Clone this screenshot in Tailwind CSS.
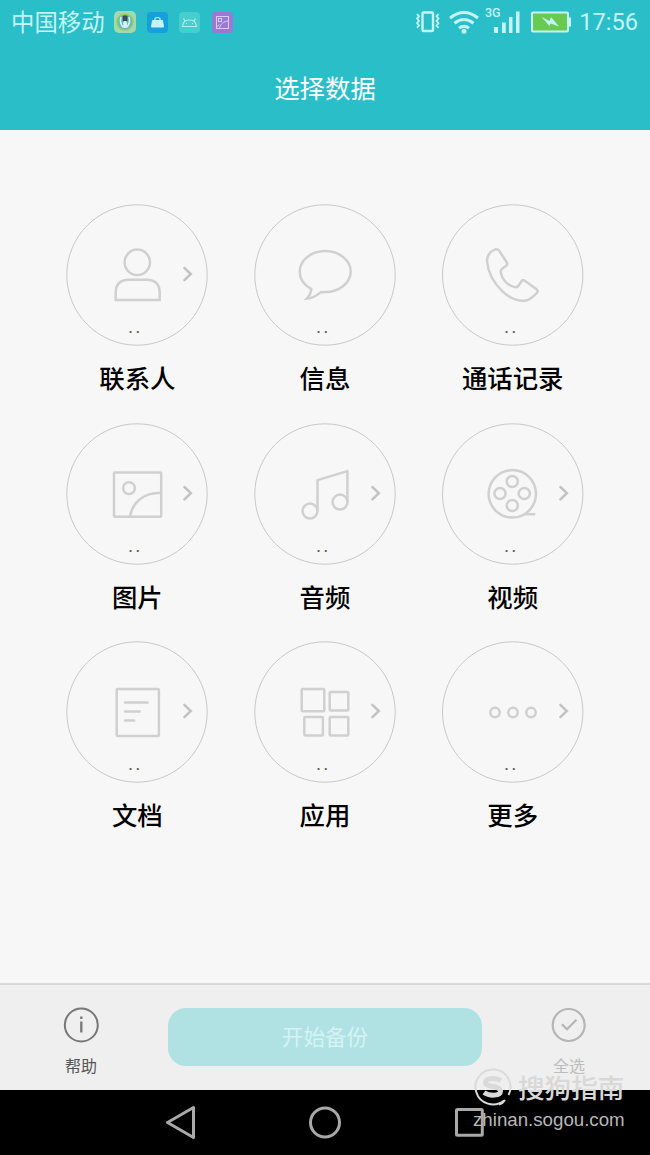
<!DOCTYPE html>
<html lang="zh-CN">
  <head>
    <meta charset="UTF-8" />
    <meta name="viewport" content="width=device-width, initial-scale=1.0" />
    <title>选择数据</title>
    <script src="https://cdn.jsdelivr.net/npm/@tailwindcss/browser@4"></script>
  </head>
  <body class="bg-[#f7f7f7] font-['Roboto','Noto_Sans_CJK_SC',sans-serif]">
    <div class="relative flex h-[1155px] w-[650px] flex-col overflow-hidden">
      <header class="h-[130px] bg-[#29bec8]">
        <!-- status bar -->
        <div class="flex h-[44px] items-center pl-[11px] pr-3 text-[#c5f4f6]">
          <span class="w-[103px] pt-[3px] text-[23.4px] leading-[41px] whitespace-nowrap">中国移动</span>
          <svg class="h-[22px] w-[22px]" viewBox="0 0 22 22" fill="none">
            <rect width="22" height="22" rx="5" fill="#a5d8b0" />
            <circle cx="11" cy="11" r="8" fill="#58bfc3" stroke="#9ccb62" stroke-width="1.5" />
            <path d="M7 6q-2 6 2.500 10.500M15 6q2 6-2.500 10.500" stroke="#e4f5e2" stroke-width="1.500" />
            <rect x="8.7" y="4.500" width="4.800" height="6" rx="1" fill="#404d59" />
            <rect x="9.200" y="10" width="3.800" height="7" rx="1.500" fill="#dceff5" />
          </svg>
          <svg class="ml-[11px] h-[21px] w-[21px]" viewBox="0 0 21 21" fill="none">
            <rect width="21" height="21" rx="4" fill="#159fdc" />
            <path d="M5.500 8.500h10l1 6.500h-12z" fill="#c9f3fa" stroke="#c9f3fa" stroke-linejoin="round" />
            <path d="M8 8V6.500q2.500-2 5 0V8" stroke="#c9f3fa" stroke-width="1.200" />
          </svg>
          <svg class="ml-[11px] h-[21px] w-[21px]" viewBox="0 0 21 21" fill="none">
            <rect width="21" height="21" rx="4" fill="#47cdcd" />
            <path d="M3.500 14.500q.5-6.500 7-6.500t7 6.500zM6 9 4.500 6.500M15 9l1.500-2.500" stroke="#b5f0ed" stroke-width="1.200" />
            <path d="M7 11.500h1M13 11.500h1" stroke="#b5f0ed" />
          </svg>
          <svg class="ml-3 h-[21px] w-[21px]" viewBox="0 0 21 21" fill="none">
            <rect width="21" height="21" rx="4" fill="#9b78d4" />
            <g stroke="#d9cdf5">
              <rect x="4.500" y="4.500" width="12" height="12" />
              <rect x="6.500" y="6.500" width="3" height="3" />
              <path d="M7.500 16.500c.5-4 4-7.500 9-7.500M5 14.500l2.500-2" />
            </g>
          </svg>
          <div class="ml-auto flex items-center">
            <svg class="h-[44px] w-[160px]" viewBox="411 0 160 44" fill="none">
              <rect x="422.500" y="12.500" width="10.500" height="18.500" rx="1" stroke="#c5f4f6" stroke-width="2.400" />
              <path d="m417 14 2 2.300-2 2.300 2 2.300-2 2.300 2 2.300-2 2.300M438.500 14l-2 2.300 2 2.300-2 2.300 2 2.300-2 2.300 2 2.300" stroke="#c5f4f6" stroke-width="1.800" />
              <g stroke="#c5f4f6" stroke-width="3">
                <path d="M450 18q14-11 28 0" />
                <path d="M454.500 23.300q9.500-7.500 19 0" />
                <path d="M459 28.200q5-4 10 0" />
              </g>
              <circle cx="464" cy="31.200" r="2.500" fill="#c5f4f6" />
              <text x="485" y="16.500" class="text-[12.5px] font-medium" fill="#c5f4f6">3G</text>
              <path d="M494 27h4v6h-4zM502 22.500h3.800V33H502zM509 17h3.500v16H509zM516 11.500h3.500V33H516z" fill="#c5f4f6" />
              <rect x="532" y="12.500" width="36" height="19" rx="1" fill="#68ca50" stroke="#c5f4f6" stroke-width="2" />
              <path d="M569 17.500h2v9h-2z" fill="#c5f4f6" />
              <path d="m541.500 17 8 4 1.500-4 8 9.500-8.500-3-1 2.500z" fill="#c5f4f6" />
            </svg>
            <span class="ml-2 pt-px text-[23.6px] leading-[43px]">17:56</span>
          </div>
        </div>
        <h1 class="mt-[25px] text-center text-[25.4px] leading-[40px] text-white">选择数据</h1>
      </header>

      <main class="h-[853px] pt-[74.4px]">
        <div class="mx-auto grid w-[563px] auto-rows-[218.4px] grid-cols-3 text-[25.4px] font-medium text-black">
          <div class="flex flex-col items-center">
            <svg class="h-[142px] w-[142px]" viewBox="0 0 142 142" fill="none" stroke="#d0d0d0" stroke-width="2.5">
              <circle cx="71" cy="71" r="70.200" stroke="#c8c8c8" stroke-width="1" />
              <circle cx="71.300" cy="58.300" r="12.700" />
              <path d="M49.700 96V89q0-13.200 13.200-13.200h17.600q13.200 0 13.200 13.200v7z" />
              <path d="m118.400 63.800 6.400 6.200-6.400 6.200" stroke="#c3c3c3" stroke-width="2.500" stroke-linecap="round" />
              <text x="62.600" y="129" class="text-[15px] tracking-[3.1px]" fill="#555" stroke="none">..</text>
            </svg>
            <span class="mt-[13px] leading-10">联系人</span>
          </div>

          <div class="flex flex-col items-center">
            <svg class="h-[142px] w-[142px]" viewBox="0 0 142 142" fill="none" stroke="#d0d0d0" stroke-width="2.5">
              <circle cx="71" cy="71" r="70.200" stroke="#c8c8c8" stroke-width="1" />
              <path d="M57.300 85.100C50 81 45.700 75 45.700 67.800 45.700 56.300 57 47.100 71.200 47.100S96.700 56.300 96.700 67.600 85.300 88.100 71.200 88.100Q68.500 88.200 67 88.100C62.500 91.800 58.500 94.300 52.600 94.800Q56.800 90.500 57.300 85.100z" />
              <text x="62.600" y="129" class="text-[15px] tracking-[3.1px]" fill="#555" stroke="none">..</text>
            </svg>
            <span class="mt-[13px] leading-10">信息</span>
          </div>

          <div class="flex flex-col items-center">
            <svg class="h-[142px] w-[142px]" viewBox="0 0 142 142" fill="none" stroke="#d0d0d0" stroke-width="2.5">
              <circle cx="70.700" cy="71" r="70.200" stroke="#c8c8c8" stroke-width="1" />
              <path d="M56.900 46.400 64.900 58.500Q65.900 60.300 64.500 61.500L60.100 64.700Q58.400 66.100 58.800 68.500C60 75.500 65.300 81.300 72.500 83.100Q75.300 83.600 76.700 81.500L79.500 77.300Q80.900 75.400 82.800 76.700L94.500 85.200Q96.500 87 94.900 88.900C91 93.200 87 96.600 82 96.800 75 97.100 67 93.500 60.500 87.300 52 79.300 46 68 45.100 57.500 44.600 50.500 48.500 47.300 53.500 45.300Q55.700 44.700 56.900 46.400z" />
              <text x="62.600" y="129" class="text-[15px] tracking-[3.1px]" fill="#555" stroke="none">..</text>
            </svg>
            <span class="mt-[13px] leading-10">通话记录</span>
          </div>

          <div class="flex flex-col items-center">
            <svg class="h-[142px] w-[142px]" viewBox="0 0 142 142" fill="none" stroke="#d0d0d0" stroke-width="2.5">
              <circle cx="71" cy="71" r="70.200" stroke="#c8c8c8" stroke-width="1" />
              <rect x="48" y="49.500" width="47.200" height="44.300" rx="1" />
              <circle cx="63" cy="65.100" r="5.900" />
              <path d="M64 93.800C66.300 79.500 77 69.800 95 69.800" />
              <path d="m118.400 64 6.400 6.200-6.400 6.200" stroke="#c3c3c3" stroke-width="2.500" stroke-linecap="round" />
              <text x="62.600" y="129" class="text-[15px] tracking-[3.1px]" fill="#555" stroke="none">..</text>
            </svg>
            <span class="mt-[13px] leading-10">图片</span>
          </div>

          <div class="flex flex-col items-center">
            <svg class="h-[142px] w-[142px]" viewBox="0 0 142 142" fill="none" stroke="#d0d0d0" stroke-width="2.5">
              <circle cx="71" cy="71" r="70.200" stroke="#c8c8c8" stroke-width="1" />
              <circle cx="56" cy="88.100" r="7.500" />
              <circle cx="86" cy="79.100" r="7.500" />
              <path d="M63.500 88.100v-31l29.900-9v31" stroke-linejoin="round" />
              <path d="m118.400 64 6.400 6.200-6.400 6.200" stroke="#c3c3c3" stroke-width="2.500" stroke-linecap="round" />
              <text x="62.600" y="129" class="text-[15px] tracking-[3.1px]" fill="#555" stroke="none">..</text>
            </svg>
            <span class="mt-[13px] leading-10">音频</span>
          </div>

          <div class="flex flex-col items-center">
            <svg class="h-[142px] w-[142px]" viewBox="0 0 142 142" fill="none" stroke="#d0d0d0" stroke-width="2.5">
              <circle cx="70.700" cy="71" r="70.200" stroke="#c8c8c8" stroke-width="1" />
              <circle cx="70.300" cy="70.800" r="23.700" />
              <circle cx="70.300" cy="58.500" r="5.600" />
              <circle cx="58" cy="70.500" r="5.600" />
              <circle cx="82.300" cy="70.500" r="5.600" />
              <circle cx="70.300" cy="82.500" r="5.600" />
              <path d="M82 91.200h11.300" />
              <path d="m118.400 64 6.400 6.200-6.400 6.200" stroke="#c3c3c3" stroke-width="2.500" stroke-linecap="round" />
              <text x="62.600" y="129" class="text-[15px] tracking-[3.1px]" fill="#555" stroke="none">..</text>
            </svg>
            <span class="mt-[13px] leading-10">视频</span>
          </div>

          <div class="flex flex-col items-center">
            <svg class="h-[142px] w-[142px]" viewBox="0 0 142 142" fill="none" stroke="#d0d0d0" stroke-width="2.5">
              <circle cx="71" cy="71" r="70.200" stroke="#c8c8c8" stroke-width="1" />
              <rect x="50.700" y="48" width="42.200" height="47" rx="1" />
              <path d="M59 61.500h22.600M59 70.500h14.600M59 79.500h9.200" stroke-linecap="round" />
              <path d="m118.400 63.800 6.400 6.200-6.400 6.200" stroke="#c3c3c3" stroke-width="2.500" stroke-linecap="round" />
              <text x="62.600" y="129" class="text-[15px] tracking-[3.1px]" fill="#555" stroke="none">..</text>
            </svg>
            <span class="mt-[13px] leading-10">文档</span>
          </div>

          <div class="flex flex-col items-center">
            <svg class="h-[142px] w-[142px]" viewBox="0 0 142 142" fill="none" stroke="#d0d0d0" stroke-width="2.5">
              <circle cx="71" cy="71" r="70.200" stroke="#c8c8c8" stroke-width="1" />
              <rect x="47.700" y="48" width="22.600" height="22.300" rx="1" />
              <rect x="75.700" y="51" width="18.600" height="18.600" rx="1" />
              <rect x="50.300" y="76" width="18.600" height="18.600" rx="1" />
              <rect x="75.700" y="76" width="18.600" height="18.600" rx="1" />
              <path d="m118.400 63.800 6.400 6.200-6.400 6.200" stroke="#c3c3c3" stroke-width="2.500" stroke-linecap="round" />
              <text x="62.600" y="129" class="text-[15px] tracking-[3.1px]" fill="#555" stroke="none">..</text>
            </svg>
            <span class="mt-[13px] leading-10">应用</span>
          </div>

          <div class="flex flex-col items-center">
            <svg class="h-[142px] w-[142px]" viewBox="0 0 142 142" fill="none" stroke="#d0d0d0" stroke-width="2.5">
              <circle cx="70.700" cy="71" r="70.200" stroke="#c8c8c8" stroke-width="1" />
              <circle cx="53" cy="71.500" r="4.700" />
              <circle cx="71" cy="71.500" r="4.700" />
              <circle cx="89" cy="71.500" r="4.700" />
              <path d="m118.400 63.800 6.400 6.200-6.400 6.200" stroke="#c3c3c3" stroke-width="2.500" stroke-linecap="round" />
              <text x="62.600" y="129" class="text-[15px] tracking-[3.1px]" fill="#555" stroke="none">..</text>
            </svg>
            <span class="mt-[13px] leading-10">更多</span>
          </div>
        </div>
      </main>

      <footer class="flex h-[107px] justify-between border-t-2 border-[#d9d9d9] bg-[#efefef]">
        <div class="flex w-[162px] flex-col items-center pt-[22px] text-[#555]">
          <svg class="h-[36px] w-[36px]" viewBox="0 0 36 36" fill="none" stroke="#777" stroke-width="2">
            <circle cx="18.300" cy="18" r="16.500" />
            <path d="M18.300 14.500V25.500M18.300 9.500V12" stroke-width="2.300" />
          </svg>
          <span class="mt-3 text-[16px] leading-6">帮助</span>
        </div>
        <button class="mt-[23px] h-[58px] w-[314px] rounded-[18px] bg-[#b0e2e4] pt-[3px] text-[21.6px] text-[#d6f3f3]">开始备份</button>
        <div class="flex w-[162px] flex-col items-center pt-[22px] text-[#bcbcbc]">
          <svg class="h-[36px] w-[36px]" viewBox="0 0 36 36" fill="none" stroke="#b5b5b5" stroke-width="2.200">
            <circle cx="17.700" cy="18" r="16" />
            <path d="m11 17.300 5 5 9.500-9.500" />
          </svg>
          <span class="mt-3 text-[16px] leading-6">全选</span>
        </div>
      </footer>

      <nav class="h-[65px] bg-black">
        <svg class="h-[65px] w-[650px]" viewBox="0 0 650 65" fill="none" stroke="#a9a9a9" stroke-width="3">
          <path d="M167.500 32.500 193.500 17.500V47.500z" stroke-linejoin="round" />
          <circle cx="325" cy="32.500" r="14.500" />
          <rect x="456.500" y="19.500" width="25.800" height="25.800" rx="1" />
        </svg>
      </nav>

      <!-- watermark -->
      <div class="absolute top-[1067px] left-[473px] w-[170px] font-['Liberation_Sans','Noto_Sans_CJK_SC',sans-serif]">
        <div class="flex items-center gap-[5px]">
          <svg class="h-[40px] w-[40px]" viewBox="0 0 40 40" fill="none" stroke="#dadada">
            <path d="M31 33.500A17.500 17.500 0 1 1 35.500 28" stroke-width="2" />
            <path d="M26 37.500q4-1.200 6-4.500" stroke-width="2" />
            <path d="M28 13.500C23 10.500 12.500 10.500 12.500 15.500S27.500 18.500 27.500 24 16 29 11 25.500" stroke-width="5" />
          </svg>
          <span class="pt-1 text-[26.6px] leading-9 font-medium whitespace-nowrap text-[#d8d8d8]">搜狗指南</span>
        </div>
        <div class="mt-px text-[18.7px] leading-6 text-[#b8b8b8]">zhinan.sogou.com</div>
      </div>
    </div>
  </body>
</html>
